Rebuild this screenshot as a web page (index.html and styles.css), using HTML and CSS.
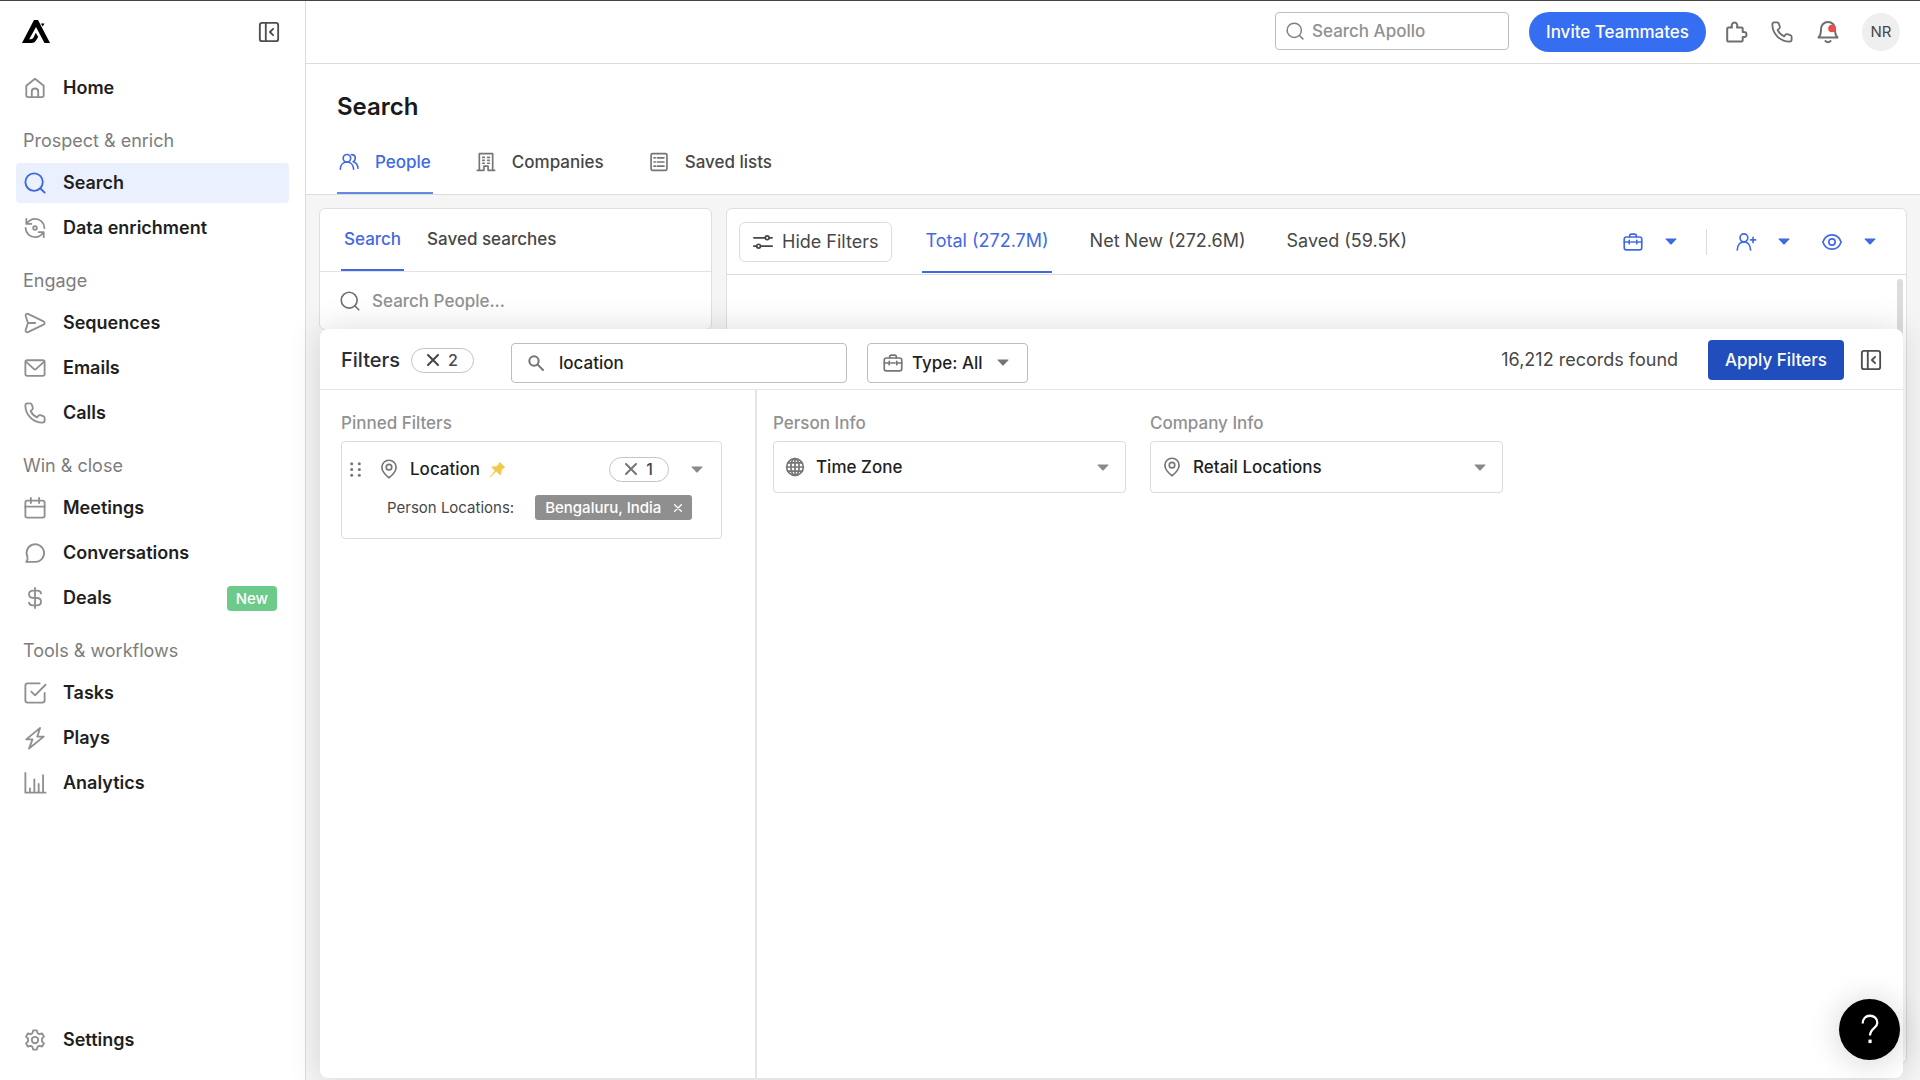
FILE: index.html
```html
<!DOCTYPE html>
<html lang="en">
<head>
<meta charset="utf-8">
<meta name="viewport" content="width=device-width, initial-scale=1">
<title>Search - Apollo</title>
<link rel="stylesheet" href="styles.css">
</head>
<body>
<svg class="sprite" aria-hidden="true">
  <symbol id="i-collapse" viewBox="0 0 24 24"><rect x="2" y="2" width="20" height="20" rx="2.5"/><path d="M8.500 2v20M16.500 8.500 13 12l3.500 3.500"/></symbol>
  <symbol id="i-search" viewBox="0 0 24 24"><circle cx="11" cy="11" r="9.500"/><path d="m18 18 4.500 4.500"/></symbol>
  <symbol id="i-phone" viewBox="0 0 24 24"><path d="M1.500 3.700c0-1.200.9-2.200 2.200-2.200h2.900c.9 0 1.700.6 2 1.500l1 3.200c.3.900 0 1.600-.6 2.100L7.200 9.700c1.300 3.100 4 5.800 7.100 7.100l1.400-1.800c.5-.6 1.200-.9 2.100-.6l3.200 1c.9.300 1.500 1.100 1.500 2v2.900c0 1.300-1 2.200-2.300 2.200C10 22.500 1.500 14 1.500 3.700z"/></symbol>
  <symbol id="i-briefcase" viewBox="0 0 24 24"><rect x="1.500" y="6" width="21" height="15.500" rx="2.500"/><path d="M8 6V4.500C8 3.400 8.900 2.500 10 2.500h4c1.100 0 2 .9 2 2V6M1.500 12h6m2 0h5m2 0h6M7.500 10v4M16.500 10v4"/></symbol>
  <symbol id="i-pin" viewBox="0 0 24 24"><path d="M12 22.500S3.500 16.500 3.500 9.700a8.500 8.200 0 0 1 17 0C20.500 16.500 12 22.500 12 22.500z"/><circle cx="12" cy="9.800" r="3.300"/></symbol>
  <symbol id="i-caret" viewBox="0 0 12 7"><path d="M1 .5h10q.9 0 .3.700L6.700 6.200q-.7.700-1.400 0L.7 1.200Q.1.500 1 .5z"/></symbol>
  <symbol id="i-x" viewBox="0 0 12 12"><path d="m1 1 10 10M11 1 1 11"/></symbol>
</svg>

<div class="app">
  <aside class="sidebar">
    <div class="brand">
      <a href="#" class="logo" aria-label="Apollo">
        <svg viewBox="0 0 28 24"><path d="M12 0h4L28 23h-5.500L14 7 7.200 19.200H9q1.600 0 2.500-1.600l2.300-4.800 2.400 4.200-2.200 3.500Q12.600 23 9.500 23H0z"/><path d="M18.800 3.500h3.700l-1.700 3z"/></svg>
      </a>
      <button class="icon-btn dark" aria-label="Collapse sidebar"><svg class="icon i22"><use href="#i-collapse"/></svg></button>
    </div>
    <nav class="nav">
      <a class="item" href="#"><svg class="icon" viewBox="0 0 24 24"><path d="M2.500 9.500 12 2l9.500 7.500V20c0 1.200-.8 2-2 2h-15c-1.200 0-2-.8-2-2z"/><path d="M8.500 22v-6c0-2 1.300-3.500 3.500-3.500s3.500 1.500 3.500 3.500v6"/></svg>Home</a>
      <h2 class="group">Prospect &amp; enrich</h2>
      <a class="item active" href="#"><svg class="icon"><use href="#i-search"/></svg>Search</a>
      <a class="item" href="#"><svg class="icon" viewBox="0 0 24 24"><circle cx="12" cy="12" r="2"/><path d="M2.500 2v5.500H8M3 7.500C5 4 8.500 2 12 2c5.500 0 10 4 10.300 10M21.500 22v-5.500H16M21 16.500C19 20 15.500 22 12 22 6.500 22 2 18 1.700 12"/></svg>Data enrichment</a>
      <h2 class="group">Engage</h2>
      <a class="item" href="#"><svg class="icon" viewBox="0 0 24 24"><path d="M1.800 4.300c-.5-1.600 1-2.900 2.500-2.300l17 8.200c1.600.8 1.600 2.800 0 3.600l-17 8.200c-1.500.6-3-.7-2.500-2.300L4.300 12zM4.300 12h8"/></svg>Sequences</a>
      <a class="item" href="#"><svg class="icon" viewBox="0 0 24 24"><rect x="1.500" y="3.500" width="21" height="17" rx="2"/><path d="m2 5 8.700 8q1.300 1.200 2.600 0L22 5"/></svg>Emails</a>
      <a class="item" href="#"><svg class="icon"><use href="#i-phone"/></svg>Calls</a>
      <h2 class="group">Win &amp; close</h2>
      <a class="item" href="#"><svg class="icon" viewBox="0 0 24 24"><rect x="1.500" y="4" width="21" height="18.500" rx="2"/><path d="M1.500 10.500h21M7.500 1v5.500M16.500 1v5.500"/></svg>Meetings</a>
      <a class="item" href="#"><svg class="icon" viewBox="0 0 24 24"><path d="M3.800 16.500A9.600 9.600 0 1 1 12 21.700H2.500c1.300-1.600 1.800-3.200 1.300-5.200z"/></svg>Conversations</a>
      <a class="item" href="#"><svg class="icon" viewBox="0 0 24 24"><path d="M12 1v22M18.500 7c0-2-2-3-4-3H10C7.500 4 5.500 5.500 5.500 8S7.500 12 10 12h4c2.500 0 4.500 1.500 4.500 4s-2 4-4.500 4h-4.500c-2 0-4-1-4-3"/></svg>Deals<span class="badge">New</span></a>
      <h2 class="group">Tools &amp; workflows</h2>
      <a class="item" href="#"><svg class="icon" viewBox="0 0 24 24"><path d="M17 1.500H4C2.500 1.500 1.500 2.500 1.500 4v16c0 1.500 1 2.500 2.500 2.500h16c1.500 0 2.500-1 2.500-2.500v-8M8 10.500l4 4L23.500 3"/></svg>Tasks</a>
      <a class="item" href="#"><svg class="icon" viewBox="0 0 24 24"><path d="M17.500 1 2.500 13.500h6.800L5.500 23.500l16-13h-7z"/></svg>Plays</a>
      <a class="item" href="#"><svg class="icon" viewBox="0 0 24 24"><path d="M1.500 1v21.500h22M6.500 18v4M11.300 8v14M16 13v9M20.800 3.500V22"/></svg>Analytics</a>
      <a class="item settings" href="#"><svg class="icon" viewBox="0 0 24 24"><circle cx="12" cy="12" r="3.500"/><path d="M10 1.500h4l.8 3 2 1.200 3-.8 2 3.500-2.200 2.200v2.800l2.200 2.200-2 3.500-3-.8-2 1.200-.8 3h-4l-.8-3-2-1.200-3 .8-2-3.500 2.200-2.200v-2.800L2.200 8.400l2-3.500 3 .8 2-1.200z"/></svg>Settings</a>
    </nav>
  </aside>

  <main class="main">
    <header class="topbar">
      <label class="global-search"><svg class="icon i18"><use href="#i-search"/></svg><input type="search" placeholder="Search Apollo" aria-label="Search Apollo"></label>
      <button class="invite">Invite Teammates</button>
      <div class="tools">
        <button class="icon-btn mid" aria-label="Extensions"><svg class="icon i24" viewBox="0 0 24 24"><path d="M4.500 7.500H8C7 4.500 8.500 2.500 10.500 2.500S14 4.500 13 7.500h4.500c.8 0 1.200.5 1.200 1.200V12c2.500-.5 3.800.7 3.800 2.500s-1.300 3-3.800 2.500v3.300c0 .8-.5 1.200-1.200 1.200h-13c-.8 0-1.300-.5-1.300-1.200V8.700c0-.8.500-1.200 1.300-1.200z"/></svg></button>
        <button class="icon-btn mid" aria-label="Dialer"><svg class="icon"><use href="#i-phone"/></svg></button>
        <button class="icon-btn mid" aria-label="Notifications"><svg class="icon i24" viewBox="0 0 24 24"><path d="M2.500 17.500C4.500 15.500 5 13 5 9.500c0-4.500 3-7.500 7-7.500s7 3 7 7.500c0 3.500.5 6 2.500 8zM9.500 21c1.500 1.500 3.500 1.500 5 0"/><circle class="dot" cx="16" cy="8.500" r="3.800"/></svg></button>
      </div>
      <button class="avatar">NR</button>
    </header>

    <section class="page-head">
      <h1>Search</h1>
      <nav class="tabs">
        <a class="tab active" href="#"><svg class="icon i20" viewBox="0 0 24 24"><circle cx="9.500" cy="7.500" r="4.500"/><path d="M1.500 20.500c.3-5 3.500-8.500 8-8.500s7.700 3.500 8 8.500M15 3.200c3 0 4.500 2 4.500 4.300 0 2-1 3.500-2.500 4.200 3 .8 5.500 3.500 5.700 7.800"/></svg>People</a>
        <a class="tab" href="#"><svg class="icon i20" viewBox="0 0 24 24"><path d="M4 22V2h16v20M1.500 22H9.500v-5h5v5h8M8 6.500h2M14 6.500h2M8 10h2M14 10h2M8 13.500h2M14 13.500h2"/></svg>Companies</a>
        <a class="tab" href="#"><svg class="icon i20" viewBox="0 0 24 24"><rect x="2.500" y="2" width="19" height="20" rx="1.500"/><path d="M6 7h1.500M10 7h8M6 12h1.500M10 12h8M6 17h1.500M10 17h8"/></svg>Saved lists</a>
      </nav>
    </section>

    <div class="workspace">
      <section class="card search-card">
        <nav class="subtabs">
          <a class="subtab active" href="#">Search</a>
          <a class="subtab" href="#">Saved searches</a>
        </nav>
        <label class="people-search"><svg class="icon i20"><use href="#i-search"/></svg><input type="search" placeholder="Search People..." aria-label="Search People"></label>
      </section>

      <section class="card results-card">
        <div class="results-bar">
          <button class="hide-filters"><svg class="icon i20" viewBox="0 0 24 24"><path d="M1 7h14M19.500 7H23M1 17h3.500M9 17h14"/><circle cx="17" cy="7" r="2.300"/><circle cx="6.700" cy="17" r="2.300"/></svg>Hide Filters</button>
          <nav class="counts">
            <a class="count active" href="#">Total (272.7M)</a>
            <a class="count" href="#">Net New (272.6M)</a>
            <a class="count" href="#">Saved (59.5K)</a>
          </nav>
          <div class="views">
            <button class="view" aria-label="Job options"><svg class="icon i20"><use href="#i-briefcase"/></svg><svg class="caret"><use href="#i-caret"/></svg></button>
            <span class="divider"></span>
            <button class="view" aria-label="Add person"><svg class="icon i20" viewBox="0 0 24 24"><circle cx="9.500" cy="7" r="4.700"/><path d="M1.500 21.500c.3-6 3.500-9.700 8-9.700s7.700 3.700 8 9.700M20.500 6.500v6M17.500 9.500h6"/></svg><svg class="caret"><use href="#i-caret"/></svg></button>
            <button class="view" aria-label="Visibility"><svg class="icon i20" viewBox="0 0 24 24"><path d="M1 12c2-5.500 6-8.500 11-8.500s9 3 11 8.500c-2 5.500-6 8.500-11 8.500S3 17.500 1 12z"/><circle cx="12" cy="12" r="3.800"/></svg><svg class="caret"><use href="#i-caret"/></svg></button>
          </div>
        </div>
        <div class="scroll-thumb"></div>
      </section>

      <section class="filters">
        <header class="filters-head">
          <div class="filters-title"><h2>Filters</h2><button class="pill" aria-label="Clear 2 filters"><svg class="icon i12"><use href="#i-x"/></svg>2</button></div>
          <div class="filters-find">
            <label class="filter-search"><svg class="icon i16" viewBox="0 0 24 24"><circle cx="9" cy="9" r="7"/><path d="m14.500 14.500 8 8"/></svg><input type="text" value="location" aria-label="Find a filter"></label>
            <label class="type-select"><svg class="icon i20"><use href="#i-briefcase"/></svg><select aria-label="Filter type"><option>Type: All</option></select><svg class="caret"><use href="#i-caret"/></svg></label>
          </div>
          <span class="records">16,212 records found</span>
          <button class="apply">Apply Filters</button>
          <button class="icon-btn dark" aria-label="Collapse filters"><svg class="icon i22"><use href="#i-collapse"/></svg></button>
        </header>
        <div class="filters-body">
          <div class="pinned">
            <h3>Pinned Filters</h3>
            <div class="pinned-card">
              <div class="pinned-row">
                <svg class="grip" viewBox="0 0 11 15"><circle cx="1.700" cy="1.700" r="1.500"/><circle cx="9.300" cy="1.700" r="1.500"/><circle cx="1.700" cy="7.500" r="1.500"/><circle cx="9.300" cy="7.500" r="1.500"/><circle cx="1.700" cy="13.300" r="1.500"/><circle cx="9.300" cy="13.300" r="1.500"/></svg>
                <svg class="icon i20"><use href="#i-pin"/></svg>
                <span>Location</span>
                <svg class="tack" viewBox="0 0 17 17"><path d="m10.500.7 5.800 5.600-2 1-1.800 2.200-.2 3.500-1.300 1.200-3.700-3.600L1 16.500.4 16l5.500-6.200L2.500 6.500l1.200-1.200 3.500.2 2.300-2z"/></svg>
                <button class="pill push" aria-label="Clear 1 location"><svg class="icon i12"><use href="#i-x"/></svg>1</button>
                <button class="icon-btn" aria-label="Expand Location"><svg class="caret"><use href="#i-caret"/></svg></button>
              </div>
              <div class="pinned-values">
                <span>Person Locations:</span>
                <button class="tag">Bengaluru, India<svg class="icon i8"><use href="#i-x"/></svg></button>
              </div>
            </div>
          </div>
          <div class="groups">
            <div class="filter-group">
              <h3>Person Info</h3>
              <button class="filter-row"><svg class="icon i20" viewBox="0 0 24 24"><circle cx="12" cy="12" r="10"/><ellipse cx="12" cy="12" rx="5" ry="10"/><path d="M12 2v20M2 12h20M3.500 7h17M3.500 17h17"/></svg>Time Zone<svg class="caret"><use href="#i-caret"/></svg></button>
            </div>
            <div class="filter-group">
              <h3>Company Info</h3>
              <button class="filter-row"><svg class="icon i20"><use href="#i-pin"/></svg>Retail Locations<svg class="caret"><use href="#i-caret"/></svg></button>
            </div>
          </div>
        </div>
      </section>
    </div>
  </main>
</div>
<button class="help" aria-label="Help"><svg viewBox="0 0 24 36"><path d="M4 11.500C4 6 7.500 3 12 3s8 3 8 7.500c0 6-8 6-8 14"/><rect x="10.300" y="29" width="3.500" height="3.800"/></svg></button>
</body>
</html>
```
FILE: styles.css
```css
* { box-sizing: border-box; }
body {
  margin: 0;
  font: 500 17px/24px Inter, "Liberation Sans", sans-serif;
  color: #474747;
  background: #fff;
}
h1, h2, h3 { margin: 0; font-weight: 500; }
a { color: inherit; text-decoration: none; }
button, input, select {
  margin: 0;
  padding: 0;
  border: 0;
  background: none;
  color: inherit;
  font: inherit;
}
input { min-width: 0; outline: 0; }
input::placeholder { color: #919191; opacity: 1; }
.sprite { position: absolute; width: 0; height: 0; }

.icon {
  width: 22px;
  height: 22px;
  flex: none;
  fill: none;
  stroke: currentColor;
  stroke-width: 2;
  stroke-linecap: round;
  stroke-linejoin: round;
  overflow: visible;
}
.i24 { width: 24px; height: 24px; }
.i20 { width: 20px; height: 20px; }
.i18 { width: 18px; height: 18px; }
.i16 { width: 16px; height: 16px; stroke-width: 3; }
.i12 { width: 12px; height: 12px; stroke-width: 2; }
.i8 { width: 8px; height: 8px; }
.caret { width: 12px; height: 7px; flex: none; fill: currentColor; }
.icon-btn { display: flex; color: #8a8a8a; }
.icon-btn.dark { color: #4d4d4d; }
.icon-btn.mid { color: #6e6e6e; }

.app {
  display: flex;
  min-height: 100vh;
  border-top: 1px solid #444;
}

.sidebar {
  display: flex;
  flex-direction: column;
  width: 306px;
  flex: none;
  border-right: 1px solid #dcdcdc;
}
.brand {
  display: flex;
  align-items: center;
  justify-content: space-between;
  height: 62px;
  padding: 0 25px 0 22px;
}
.logo svg { display: block; width: 28px; height: 24px; fill: #000; }
.nav {
  display: flex;
  flex-direction: column;
  flex: 1;
  gap: 5px;
  padding: 5px 16px 20px;
}
.item {
  display: flex;
  align-items: center;
  gap: 17px;
  height: 40px;
  padding: 0 12px 0 8px;
  border-radius: 4px;
  color: #1f1f1f;
  font-size: 18px;
  font-weight: 600;
}
.item .icon { color: #8f8f8f; }
.item.active { background: #eaf0fd; }
.item.active .icon { color: #3a66e0; }
.group {
  margin: 16px 0 5px 7px;
  font-size: 18px;
  line-height: 24px;
  color: #7d7d7d;
  font-weight: 400;
}
.badge {
  margin-left: auto;
  padding: 0 9px;
  border-radius: 4px;
  background: #6ccb8b;
  color: #fff;
  font-size: 15px;
  line-height: 25px;
  font-weight: 500;
}
.settings { margin-top: auto; }

.main {
  display: flex;
  flex-direction: column;
  flex: 1;
  min-width: 0;
}
.topbar {
  display: flex;
  align-items: center;
  justify-content: flex-end;
  height: 63px;
  padding: 0 20px;
  border-bottom: 1px solid #dcdcdc;
}
.global-search {
  display: flex;
  align-items: center;
  gap: 8px;
  width: 234px;
  height: 38px;
  margin: 0 20px 2px 0;
  padding: 0 10px;
  border: 1px solid #bdbdbd;
  border-radius: 4px;
  color: #808080;
}
.global-search input, .people-search input, .filter-search input { flex: 1; }
.invite {
  height: 40px;
  padding: 0 17px;
  border-radius: 20px;
  background: #356ef0;
  color: #fff;
}
.tools { display: flex; align-items: center; gap: 23px; margin: 0 22px 0 18px; }
.dot { fill: #eb4d4d; stroke: none; }
.avatar {
  width: 38px;
  height: 38px;
  border-radius: 50%;
  background: #efefef;
  font-size: 15px;
  font-weight: 400;
}

.page-head {
  padding: 25px 31px 0;
  border-bottom: 1px solid #dcdcdc;
}
h1 {
  color: #1a1a1a;
  font-size: 24px;
  line-height: 36px;
  font-weight: 600;
}
.tabs { display: flex; gap: 41px; margin-top: 6px; }
.tab {
  display: flex;
  align-items: center;
  gap: 16px;
  height: 63px;
  padding: 0 2px;
  border-bottom: 2px solid transparent;
}
.tab .icon { color: #757575; }
.tab.active, .tab.active .icon { color: #4169e6; }
.tab.active { border-color: #6488e6; }

.workspace {
  position: relative;
  display: flex;
  flex: 1;
  align-items: flex-start;
  gap: 14px;
  padding: 13px 13px 16px;
  background: #f5f5f5;
}
.card {
  border: 1px solid #dfdfdf;
  border-radius: 6px;
  background: #fff;
}
.search-card { width: 393px; flex: none; }
.subtabs {
  display: flex;
  gap: 20px;
  padding: 0 21px;
  border-bottom: 1px solid #e3e3e3;
}
.subtab {
  padding: 18px 3px;
  border-bottom: 2px solid transparent;
}
.subtab.active, .count.active { color: #4169e6; border-color: #4169e6; }
.people-search {
  display: flex;
  align-items: center;
  gap: 12px;
  height: 57px;
  padding: 0 20px;
  color: #707070;
}
.results-card { flex: 1; align-self: stretch; min-width: 0; }
.results-bar {
  display: flex;
  align-items: center;
  height: 66px;
  padding: 0 30px 0 12px;
  border-bottom: 1px solid #dcdcdc;
}
.hide-filters {
  display: flex;
  align-items: center;
  gap: 9px;
  height: 40px;
  padding: 0 13px;
  border: 1px solid #dcdcdc;
  border-radius: 6px;
}
.counts { display: flex; gap: 35px; margin-left: 30px; }
.hide-filters, .count, .records { font-size: 18px; font-weight: 400; }
.count { padding: 19px 3px 18px; border-bottom: 2px solid transparent; white-space: nowrap; }
.views {
  display: flex;
  align-items: center;
  gap: 32px;
  margin-left: auto;
  color: #4169e6;
}
.view { display: flex; align-items: center; gap: 22px; }
.divider { width: 1px; height: 26px; margin: 0 -3px; background: #dcdcdc; }
.scroll-thumb {
  width: 6px;
  height: 64px;
  margin: 4px 3px 0 auto;
  border-radius: 3px;
  background: #dcdcdc;
}

.filters {
  position: absolute;
  inset: 134px 17px 2px 14px;
  display: flex;
  flex-direction: column;
  border-radius: 8px;
  background: #fff;
  box-shadow: 0 0 34px rgba(0, 0, 0, .14);
}
.filters-head {
  display: flex;
  align-items: center;
  height: 61px;
  padding: 2px 21px 0;
  border-bottom: 1px solid #e6e6e6;
}
.filters-title { display: flex; align-items: center; gap: 11px; width: 170px; }
.filters-title h2 { color: #2a2d38; font-size: 20px; }
.pill {
  display: flex;
  align-items: center;
  gap: 9px;
  height: 25px;
  padding: 0 15px;
  border: 1px solid #c4c4c4;
  border-radius: 13px;
  font-size: 16px;
}
.filters-find { display: flex; gap: 20px; margin-top: 5px; }
.filter-search, .type-select {
  display: flex;
  align-items: center;
  height: 40px;
  padding: 0 16px;
  border: 1px solid #bdbdbd;
  border-radius: 4px;
  color: #757575;
}
.filter-search { gap: 15px; width: 336px; }
.filter-search input, .type-select select { color: #1f1f1f; }
.type-select { gap: 9px; padding: 0 18px 0 15px; }
.type-select select { appearance: none; }
.type-select .caret { margin-left: 5px; }
.records { margin-left: auto; }
.apply {
  height: 40px;
  margin: 0 16px 0 30px;
  padding: 0 17px;
  border-radius: 4px;
  background: #204fbd;
  color: #fff;
}
.filters-body { display: flex; flex: 1; }
.pinned {
  width: 437px;
  padding: 21px 33px 0 21px;
  border-right: 2px solid #e6e6e6;
}
h3 {
  margin-bottom: 6px;
  color: #919191;
  font-size: 17px;
  line-height: 24px;
  font-weight: 500;
}
.pinned-card {
  padding: 14px 18px 18px 8px;
  border: 1px solid #dcdcdc;
  border-radius: 4px;
}
.pinned-row { display: flex; align-items: center; height: 26px; color: #1f1f1f; }
.grip { width: 11px; height: 15px; margin-right: 18px; fill: #757575; }
.pinned-row .icon, .filter-row .icon { color: #757575; }
.pinned-row .icon.i20 { margin-right: 11px; }
.tack { width: 17px; height: 17px; margin-left: 9px; fill: #f2c94c; }
.pinned-row .pill { color: #474747; }
.push { margin: 0 22px 0 auto; }
.pinned-values {
  display: flex;
  align-items: center;
  gap: 21px;
  margin-top: 13px;
  padding-left: 37px;
  font-size: 15px;
  font-weight: 400;
}
.tag {
  display: flex;
  align-items: center;
  gap: 13px;
  height: 25px;
  padding: 0 10px;
  border-radius: 3px;
  background: #8f8f8f;
  color: #fff;
  font-weight: 500;
}
.groups { display: flex; flex: 1; gap: 24px; padding: 21px 16px; }
.filter-group { width: 353px; }
.filter-row {
  display: flex;
  align-items: center;
  gap: 11px;
  width: 100%;
  height: 52px;
  padding: 0 16px 0 11px;
  border: 1px solid #dcdcdc;
  border-radius: 4px;
  color: #1f1f1f;
}
.filter-row .caret { margin-left: auto; color: #8a8a8a; }

.help {
  position: fixed;
  right: 20px;
  bottom: 20px;
  display: flex;
  align-items: center;
  justify-content: center;
  width: 61px;
  height: 61px;
  border-radius: 50%;
  background: #000;
  box-shadow: 0 2px 32px rgba(0, 0, 0, .18);
}
.help svg { width: 22px; height: 33px; fill: none; stroke: #fff; stroke-width: 2.500; }
.help rect { fill: #fff; stroke: none; }
```
